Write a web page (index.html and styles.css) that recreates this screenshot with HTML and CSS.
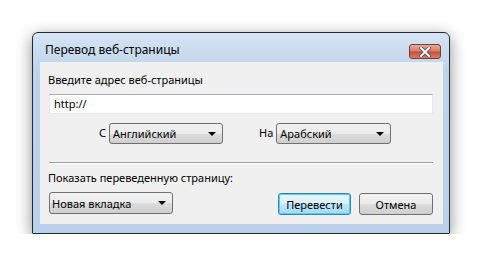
FILE: index.html
```html
<!DOCTYPE html>
<html lang="ru">
<head>
  <meta charset="UTF-8">
  <title>Перевод веб-страницы</title>
  <link rel="stylesheet" href="styles.css">
</head>
<body>
  <div class="window">
    <div class="titlebar">
      <span class="title">Перевод веб-страницы</span>
      <div class="close-btn">
        <svg width="12" height="10" viewBox="0 0 12 10">
          <path d="M2 1 L10 9 M10 1 L2 9" stroke="#4a4a4a" stroke-width="3.6" stroke-linecap="square"/>
          <path d="M2 1 L10 9 M10 1 L2 9" stroke="#fff" stroke-width="2" stroke-linecap="square"/>
        </svg>
      </div>
    </div>
    <div class="client">
      <div class="label">Введите адрес веб-страницы</div>
      <div class="url-input">http://</div>
      <div class="lang-row">
        <span class="lang-label">С</span>
        <div class="combo combo-from">
          <span>Английский</span>
          <span class="arrow"></span>
        </div>
        <span class="lang-label lang-label-to">На</span>
        <div class="combo combo-to">
          <span>Арабский</span>
          <span class="arrow"></span>
        </div>
      </div>
      <div class="separator"></div>
      <div class="label label-show">Показать переведенную страницу:</div>
      <div class="bottom-row">
        <div class="combo combo-target">
          <span>Новая вкладка</span>
          <span class="arrow"></span>
        </div>
        <div class="buttons">
          <div class="btn btn-default">Перевести</div>
          <div class="btn">Отмена</div>
        </div>
      </div>
    </div>
  </div>
</body>
</html>
```

FILE: styles.css
```css
body {
  margin: 0;
  padding: 32px 0 0 32px;
  background-color: #ffffff;
  font-family: "Noto Sans", "Liberation Sans", sans-serif;
  font-size: 11px;
  color: #000;
}

.window {
  width: 403px;
  border: 1px solid #1f2a33;
  border-radius: 6px 6px 1px 1px;
  background: linear-gradient(#d6e4f3, #bdd3eb 40px, #b9d1ea);
  box-shadow: 0 4px 16px rgba(0, 0, 0, 0.45);
  padding: 0 6px 9px 7px;
}

.titlebar {
  height: 29px;
  display: flex;
  align-items: center;
  justify-content: space-between;
}

.title {
  padding-left: 5px;
  padding-top: 4px;
  font-size: 12px;
  color: #000;
}

.close-btn {
  width: 30px;
  height: 13px;
  margin-top: 8px;
  margin-right: 2px;
  border: 1px solid #7a3b33;
  border-radius: 3px;
  background: linear-gradient(#e9a99b, #d47a69 48%, #c24f3a 52%, #d77e62);
  display: flex;
  align-items: center;
  justify-content: center;
}

.client {
  background-color: #f0f0f0;
  height: 162px;
  padding: 0 10px 0 9px;
}

.label {
  padding-top: 10px;
  height: 17px;
  margin-left: -1px;
}

.url-input {
  margin-top: 5px;
  height: 18px;
  line-height: 18px;
  border: 1px solid #e3e9ef;
  border-top-color: #abadb3;
  background-color: #fff;
  padding-left: 4px;
}

.lang-row {
  display: flex;
  align-items: center;
  margin-top: 9px;
  height: 21px;
  padding-left: 50px;
}

.lang-label {
  margin-right: 3px;
  margin-top: -2px;
}

.lang-label-to {
  margin-left: 36px;
}

.combo {
  border: 1px solid #707070;
  border-radius: 3px;
  background: linear-gradient(#f2f2f2, #ebebeb 50%, #dddddd 51%, #cfcfcf);
  display: flex;
  align-items: center;
  justify-content: space-between;
  padding: 0 6px 0 3px;
  box-sizing: border-box;
  height: 21px;
}

.combo-from {
  width: 114px;
}

.combo-to {
  width: 115px;
}

.combo-target {
  width: 124px;
  height: 22px;
  padding-left: 2px;
}

.arrow {
  width: 0;
  height: 0;
  border-left: 4px solid transparent;
  border-right: 4px solid transparent;
  border-top: 4px solid #000;
}

.separator {
  margin-top: 18px;
  border-top: 1px solid #a0a0a0;
  border-bottom: 1px solid #fff;
}

.label-show {
  padding-top: 6px;
}

.bottom-row {
  display: flex;
  justify-content: space-between;
  align-items: flex-start;
  margin-top: 5px;
}

.buttons {
  display: flex;
  gap: 8px;
  margin-top: 1px;
}

.btn {
  width: 74px;
  height: 22px;
  box-sizing: border-box;
  border: 1px solid #707070;
  border-radius: 3px;
  background: linear-gradient(#f2f2f2, #ebebeb 50%, #dddddd 51%, #cfcfcf);
  display: flex;
  align-items: center;
  justify-content: center;
}

.btn-default {
  width: 73px;
  border-color: #3c7fb1;
  box-shadow: inset 0 0 0 1px #48d7fb;
  background: linear-gradient(#eaf6fd, #d9f0fc 50%, #bee6fd 51%, #a7d9f5);
}
```
